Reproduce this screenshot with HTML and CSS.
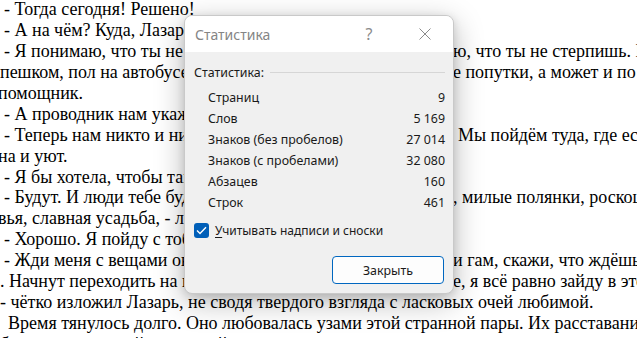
FILE: index.html
```html
<!DOCTYPE html>
<html lang="ru">
<head>
  <meta charset="UTF-8">
  <meta name="viewport" content="width=device-width, initial-scale=1.0">
  <title>Статистика</title>
  <link rel="stylesheet" href="styles.css">
</head>
<body>
  <div class="page">
    <p class="ln ind">- Тогда сегодня! Решено!</p>
    <p class="ln ind">- А на чём? Куда, Лазарь?</p>
    <p class="ln split"><span class="l ind">- Я понимаю, что ты не хочешь ждать, я понима</span><span class="r">ю, что ты не стерпишь. Но</span></p>
    <p class="ln split"><span class="l">пешком, пол на автобусе, а дальше на попутк</span><span class="r">е попутки, а может и по</span></p>
    <p class="ln cut">помощник.</p>
    <p class="ln ind">- А проводник нам укажет дорогу?</p>
    <p class="ln split"><span class="l ind">- Теперь нам никто и ничто не помешает.</span><span class="r sp">Мы пойдём туда, где есть</span></p>
    <p class="ln cut">на и уют.</p>
    <p class="ln ind">- Я бы хотела, чтобы там было тихо.</p>
    <p class="ln split"><span class="l ind">- Будут. И люди тебе будут рады, и лес</span><span class="r">, милые полянки, роскошные</span></p>
    <p class="ln cut">вья, славная усадьба, - ласково ответил он.</p>
    <p class="ln ind">- Хорошо. Я пойду с тобой.</p>
    <p class="ln split"><span class="l ind">- Жди меня с вещами около дома, а если будет шум</span><span class="r">и гам, скажи, что ждёшь</span></p>
    <p class="ln split"><span class="l">. Начнут переходить на крик, не бойся, ведь что бы ни было</span><span class="r">е, я всё равно зайду в этот</span></p>
    <p class="ln">- чётко изложил Лазарь, не сводя твердого взгляда с ласковых очей любимой.</p>
    <p class="ln para">Время тянулось долго. Оно любовалась узами этой странной пары. Их расставание</p>
    <p class="ln">было мучительной преградой, но как только они вновь держали друг друга за руки,</p>
  </div>

  <div class="dialog">
    <div class="titlebar">
      <span class="title">Статистика</span>
      <span class="tb-btn help">?</span>
      <span class="tb-btn close">
        <svg width="12" height="12" viewBox="0 0 12 12"><path d="M0.5 0.5 L11.5 11.5 M11.5 0.5 L0.5 11.5" stroke="#8b8b8b" stroke-width="1" fill="none"/></svg>
      </span>
    </div>
    <div class="dlg-body">
      <div class="group-head"><span>Статистика:</span><span class="rule"></span></div>
      <div class="stats">
        <div class="row"><span>Страниц</span><span>9</span></div>
        <div class="row"><span>Слов</span><span>5 169</span></div>
        <div class="row"><span>Знаков (без пробелов)</span><span>27 014</span></div>
        <div class="row"><span>Знаков (с пробелами)</span><span>32 080</span></div>
        <div class="row"><span>Абзацев</span><span>160</span></div>
        <div class="row"><span>Строк</span><span>461</span></div>
      </div>
      <label class="check">
        <span class="box">
          <svg width="11" height="9" viewBox="0 0 11 9"><path d="M1 4.6 L4 7.5 L10 1.3" stroke="#fff" stroke-width="1.4" fill="none"/></svg>
        </span>
        <span><u>У</u>читывать надписи и сноски</span>
      </label>
      <div class="actions"><button class="btn">Закрыть</button></div>
    </div>
  </div>
</body>
</html>
```

FILE: styles.css
```css
html, body {
  margin: 0;
  height: 100%;
  overflow: hidden;
  background: #fff;
}
body {
  position: relative;
  font-family: "Liberation Serif", "Times New Roman", serif;
  font-size: 18px;
  color: #000;
}
.page {
  margin-top: -1px;
}
.ln {
  margin: 0;
  height: 20.95px;
  line-height: 20.95px;
  white-space: nowrap;
}
.ind {
  padding-left: 4px;
}
.para {
  padding-left: 8px;
}
.cut {
  margin-left: -2px;
}
.split {
  display: grid;
  grid-template-columns: 453px auto;
}
.split .l {
  overflow: hidden;
}
.split .r.sp {
  padding-left: 5px;
}

/* dialog */
.dialog {
  position: absolute;
  left: 184px;
  top: 15px;
  width: 270px;
  height: 279px;
  box-sizing: border-box;
  border: 1px solid #c9c9c9;
  border-radius: 8px;
  background: #f0f0f0;
  overflow: hidden;
  box-shadow: 0 8px 30px rgba(0, 0, 0, 0.28), 0 2px 8px rgba(0, 0, 0, 0.12);
  font-family: "Noto Sans", "Open Sans", sans-serif;
  font-size: 12.4px;
  color: #1a1a1a;
}
.titlebar {
  display: flex;
  align-items: center;
  height: 36px;
  background: #fff;
}
.title {
  flex: 1;
  padding-left: 10px;
  font-size: 14px;
  color: #858585;
}
.tb-btn {
  width: 56px;
  display: flex;
  justify-content: center;
  align-items: center;
  color: #8b8b8b;
}
.help {
  font-size: 16px;
}
.dlg-body {
  padding: 10px 8px 0 9px;
}
.group-head {
  display: flex;
  align-items: center;
  height: 20px;
}
.rule {
  flex: 1;
  height: 1px;
  margin-left: 6px;
  background: #d6d6d6;
}
.stats {
  margin-top: 5px;
  padding-left: 14px;
}
.row {
  display: flex;
  justify-content: space-between;
  height: 21px;
  line-height: 21px;
}
.check {
  display: flex;
  align-items: center;
  gap: 6px;
  height: 20px;
  margin-top: 7px;
}
.check span:last-child {
  font-size: 12px;
}
.box {
  width: 15px;
  height: 15px;
  border-radius: 3px;
  background: #005fb8;
  display: flex;
  justify-content: center;
  align-items: center;
}
.check u {
  text-underline-offset: 2px;
}
.actions {
  display: flex;
  justify-content: flex-end;
  margin-top: 16px;
  padding-right: 1px;
}
.btn {
  width: 112px;
  height: 28px;
  border: 1px solid #0067c0;
  border-radius: 4px;
  background: #fdfdfd;
  font-family: inherit;
  font-size: 12.4px;
  color: #1a1a1a;
}
```
